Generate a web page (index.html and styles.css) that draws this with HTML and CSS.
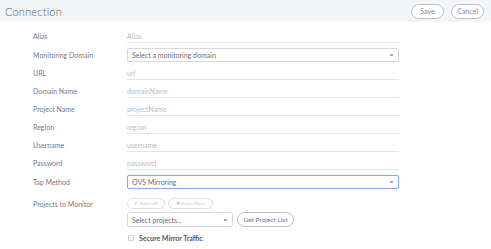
FILE: index.html
```html
<!DOCTYPE html>
<html lang="en">
  <head>
    <meta charset="UTF-8" />
    <title>Connection</title>
    <link rel="stylesheet" href="styles.css">
  </head>
  <body>
    <div class="header">
      <h1>Connection</h1>
      <div class="actions">
        <button class="pill save">Save</button>
        <button class="pill cancel">Cancel</button>
      </div>
    </div>
    <form class="form">
      <div class="row">
        <label>Alias</label>
        <div class="line">Alias</div>
      </div>
      <div class="row select-row">
        <label>Monitoring Domain</label>
        <div class="select"><span>Select a monitoring domain</span><i class="caret"></i></div>
      </div>
      <div class="row">
        <label>URL</label>
        <div class="line">url</div>
      </div>
      <div class="row">
        <label>Domain Name</label>
        <div class="line">domainName</div>
      </div>
      <div class="row">
        <label>Project Name</label>
        <div class="line">projectName</div>
      </div>
      <div class="row">
        <label>Region</label>
        <div class="line">region</div>
      </div>
      <div class="row">
        <label>Username</label>
        <div class="line">username</div>
      </div>
      <div class="row">
        <label>Password</label>
        <div class="line">password</div>
      </div>
      <div class="row select-row">
        <label>Tap Method</label>
        <div class="select focus"><span>OVS Mirroring</span><i class="caret"></i></div>
      </div>
      <div class="row projects">
        <label>Projects to Monitor</label>
        <div class="stack">
          <div class="pills">
            <button type="button" class="pill small all">&#10004; Select All</button>
            <button type="button" class="pill small none">&#10006; Select None</button>
          </div>
          <div class="pick">
            <div class="select short"><span>Select projects...</span><i class="caret"></i></div>
            <button type="button" class="pill get">Get Project List</button>
          </div>
          <div class="check">
            <span class="box"></span>
            <span>Secure Mirror Traffic</span>
          </div>
        </div>
      </div>
    </form>
  </body>
</html>
```

FILE: styles.css
```css
* {
  box-sizing: border-box;
  margin: 0;
  padding: 0;
}
body {
  font-family: Lato, "Open Sans", sans-serif;
  background: #fff;
  color: #727b87;
  width: 491px;
  height: 249px;
  overflow: hidden;
}
.header {
  height: 22px;
  background: #f4f5f7;
  display: flex;
  align-items: center;
  justify-content: space-between;
  padding: 0 7px 0 5px;
}
h1 {
  font-size: 11px;
  font-weight: 300;
  color: #56606b;
  letter-spacing: 0.2px;
}
.actions {
  display: flex;
  gap: 7px;
}
.pill {
  font-family: inherit;
  background: #fff;
  border: 1px solid #b9bec4;
  border-radius: 999px;
  color: #858c95;
  cursor: pointer;
}
.save,
.cancel {
  height: 15px;
  font-size: 7px;
  width: 33px;
}
.form {
  padding: 3px 0 0 33px;
}
.row {
  display: grid;
  grid-template-columns: 94px 272px;
}
.row label {
  font-size: 7px;
  line-height: 12px;
  padding-top: 5px;
  color: #727b87;
}
.line {
  height: 18px;
  border-bottom: 1px solid #e4e5e7;
  font-size: 7px;
  line-height: 12px;
  padding-top: 5px;
  color: #babdc1;
}
.select-row {
  margin-top: 5px;
}
.select-row label {
  padding-top: 1px;
}
.select {
  height: 14px;
  border: 1px solid #d6d8db;
  border-radius: 2px;
  display: flex;
  align-items: center;
  justify-content: space-between;
  padding: 0 5px 0 4px;
  font-size: 7px;
  color: #6a7078;
}
.select.focus {
  border-color: #86a8e6;
  box-shadow: 0 0 1px #aac2ee;
}
.caret {
  width: 3px;
  height: 2px;
  border-top: 2px solid #a9aeb3;
}
.projects {
  margin-top: 9px;
}
.projects label {
  padding-top: 0;
}
.stack {
  display: flex;
  flex-direction: column;
}
.pills {
  display: flex;
  gap: 3px;
}
.pill.small {
  height: 11px;
  font-size: 4.5px;
  color: #c3c7cb;
  border-color: #dcdfe2;
}
.pill.all {
  width: 38px;
}
.pill.none {
  width: 45px;
}
.pick {
  display: flex;
  align-items: center;
  gap: 4px;
  margin-top: 3px;
}
.select.short {
  width: 106px;
  height: 15px;
}
.get {
  height: 15px;
  width: 57px;
  font-size: 6.5px;
  color: #6f7780;
}
.check {
  display: flex;
  align-items: center;
  gap: 5px;
  margin-top: 7px;
  padding-left: 1px;
  font-size: 7px;
  font-weight: 700;
  color: #4e5660;
}
.box {
  width: 6px;
  height: 6px;
  border: 1px solid #c9ccd0;
  border-radius: 1px;
}
```
